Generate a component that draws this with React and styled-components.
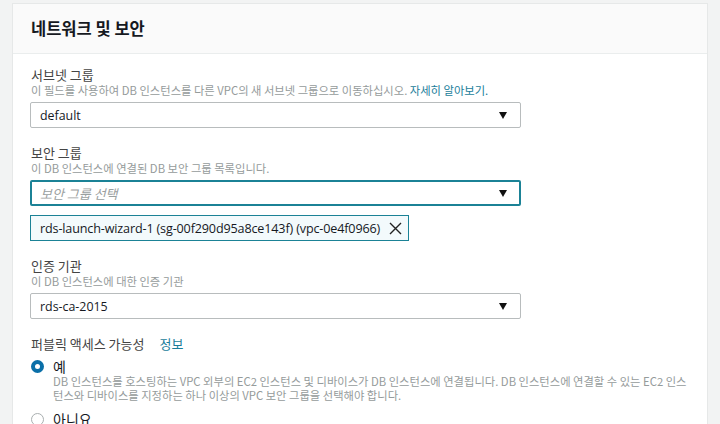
import React from "react";
import styled, { createGlobalStyle } from "styled-components";

const GlobalStyle = createGlobalStyle`
  body {
    margin: 0;
    background: #f2f3f3;
    font-family: "Open Sans", "Noto Sans CJK KR", sans-serif;
  }
`;

const Page = styled.div`
  width: 720px;
  height: 424px;
  overflow: hidden;
  padding: 3px 12px 0 12px;
  box-sizing: border-box;
`;

const Card = styled.section`
  background: #fff;
  border: 1px solid #e6e8e8;
  width: 696px;
  box-sizing: border-box;
`;

const Header = styled.header`
  height: 49px;
  background: #fafafa;
  border-bottom: 1px solid #eaeded;
  display: flex;
  align-items: center;
  padding-left: 18px;
`;

const Title = styled.h2`
  margin: 0 0 1px 0;
  font-family: "Noto Sans CJK KR", sans-serif;
  font-size: 16.5px;
  font-weight: 700;
  color: #16191f;
`;

const Body = styled.div`
  padding: 13px 17px 0 17px;
  display: flex;
  flex-direction: column;
  gap: 17px;
`;

const Field = styled.div`
  display: flex;
  flex-direction: column;
`;

const Label = styled.div`
  font-family: "Noto Sans CJK KR", sans-serif;
  font-size: 13px;
  line-height: 16px;
  color: #444;
  padding-left: 1px;
  display: flex;
  gap: 15px;
`;

const Desc = styled.div`
  font-family: "Noto Sans CJK KR", sans-serif;
  font-size: 11.3px;
  line-height: 14px;
  color: #959b9b;
  padding-left: 1px;
`;

const Link = styled.a`
  color: #1a7d9a;
  text-decoration: none;
`;

const Select = styled.div`
  margin-top: 5px;
  width: 491px;
  height: 26px;
  box-sizing: border-box;
  border: ${p => (p.$focus ? "2px solid #1b8296" : "1px solid #b8bcbd")};
  border-radius: 2px;
  display: flex;
  align-items: center;
  padding: 0 ${p => (p.$focus ? 12 : 13)}px 0 ${p => (p.$focus ? 8 : 9)}px;
  color: #16191f;
`;

const Value = styled.span`
  flex: 1;
  font-style: ${p => (p.$placeholder ? "italic" : "normal")};
  color: ${p => (p.$placeholder ? "#9aa0a0" : "#16191f")};
  font-family: ${p =>
    p.$placeholder ? '"Noto Sans CJK KR", sans-serif' : '"Open Sans", "Noto Sans CJK KR", sans-serif'};
  font-size: ${p => (p.$placeholder ? "13px" : "12.4px")};
`;

const Arrow = styled.span`
  width: 0;
  height: 0;
  border-left: 4.5px solid transparent;
  border-right: 4.5px solid transparent;
  border-top: 7px solid #111;
`;

const Token = styled.div`
  margin-top: 9px;
  align-self: flex-start;
  height: 26px;
  box-sizing: border-box;
  border: 1px solid #1b8296;
  background: #f3fafc;
  display: flex;
  align-items: center;
  gap: 9px;
  padding: 0 6px 0 9px;
  font-size: 12.6px;
  letter-spacing: -0.15px;
  color: #16191f;
`;

const Options = styled.div`
  margin-top: 6px;
  display: flex;
  flex-direction: column;
  gap: 9px;
`;

const Option = styled.div`
  display: grid;
  grid-template-columns: 13px 1fr;
  column-gap: 9px;
  align-items: start;
  padding-left: 1px;
`;

const Radio = styled.span`
  margin-top: 2px;
  width: 13px;
  height: 13px;
  box-sizing: border-box;
  border-radius: 50%;
  border: ${p => (p.$checked ? "4px solid #0a6fa8" : "1px solid #a9afb0")};
  background: #fff;
`;

const OptionLabel = styled.div`
  font-family: "Noto Sans CJK KR", sans-serif;
  font-size: 14px;
  line-height: 16px;
  color: #16191f;
`;

const OptionDesc = styled(Desc)`
  grid-column: 2;
  padding-left: 0;
  width: 634px;
`;

const CloseIcon = () => (
  <svg width="13" height="13" viewBox="0 0 13 13">
    <path d="M1 1 L12 12 M12 1 L1 12" stroke="#222" strokeWidth="1.4" fill="none" />
  </svg>
);

export default function App() {
  return (
    <>
      <GlobalStyle />
      <Page>
        <Card>
          <Header>
            <Title>네트워크 및 보안</Title>
          </Header>
          <Body>
            <Field>
              <Label>서브넷 그룹</Label>
              <Desc>
                이 필드를 사용하여 DB 인스턴스를 다른 VPC의 새 서브넷 그룹으로 이동하십시오.{" "}
                <Link>자세히 알아보기.</Link>
              </Desc>
              <Select>
                <Value>default</Value>
                <Arrow />
              </Select>
            </Field>
            <Field>
              <Label>보안 그룹</Label>
              <Desc>이 DB 인스턴스에 연결된 DB 보안 그룹 목록입니다.</Desc>
              <Select $focus>
                <Value $placeholder>보안 그룹 선택</Value>
                <Arrow />
              </Select>
              <Token>
                rds-launch-wizard-1 (sg-00f290d95a8ce143f) (vpc-0e4f0966)
                <CloseIcon />
              </Token>
            </Field>
            <Field>
              <Label>인증 기관</Label>
              <Desc>이 DB 인스턴스에 대한 인증 기관</Desc>
              <Select>
                <Value>rds-ca-2015</Value>
                <Arrow />
              </Select>
            </Field>
            <Field>
              <Label>
                퍼블릭 액세스 가능성 <Link>정보</Link>
              </Label>
              <Options>
                <Option>
                  <Radio $checked />
                  <OptionLabel>예</OptionLabel>
                  <OptionDesc>
                    DB 인스턴스를 호스팅하는 VPC 외부의 EC2 인스턴스 및 디바이스가 DB 인스턴스에 연결됩니다. DB 인스턴스에 연결할 수 있는 EC2 인스턴스와 디바이스를 지정하는 하나 이상의 VPC 보안 그룹을 선택해야 합니다.
                  </OptionDesc>
                </Option>
                <Option>
                  <Radio />
                  <OptionLabel>아니요</OptionLabel>
                </Option>
              </Options>
            </Field>
          </Body>
        </Card>
      </Page>
    </>
  );
}
